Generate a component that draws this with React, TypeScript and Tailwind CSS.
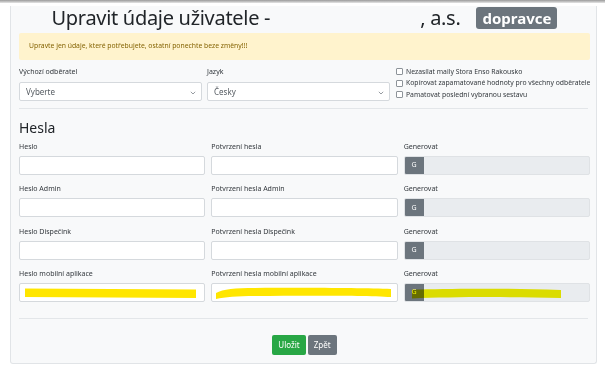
const label = "block h-[10px] text-[7px] leading-[10px] text-[#33383d]";
const input = "block h-[19px] w-full rounded-[2px] border border-[#d5d9dd] bg-white";

function Chevron() {
  return (
    <svg width="6" height="4" viewBox="0 0 6 4" className="absolute right-[5px] top-[8px]">
      <path d="M0.8 0.8 L3 3 L5.2 0.8" fill="none" stroke="#8a9096" strokeWidth="0.9" />
    </svg>
  );
}

function Select({ value }: { value: string }) {
  return (
    <div className="relative flex h-[19px] items-center rounded-[2px] border border-[#d5d9dd] bg-white pl-[6px] text-[8px] text-[#555b61]">
      {value}
      <Chevron />
    </div>
  );
}

function Check({ text }: { text: string }) {
  return (
    <div className="flex h-[11.5px] items-center gap-[3px] text-[6.8px] text-[#33383d]">
      <span className="h-[7px] w-[7px] shrink-0 rounded-[1px] border border-[#8d9399] bg-white" />
      <span className="whitespace-nowrap">{text}</span>
    </div>
  );
}

function Generate({ marked }: { marked?: boolean }) {
  return (
    <div className="relative flex h-[19px] overflow-hidden rounded-[2px] border border-[#dfe2e5] bg-[#e9ecef]">
      <div className="flex w-[19px] items-center justify-center bg-[#6c757d] text-[7px] text-white">G</div>
      {marked && (
        <svg className="absolute left-[6px] top-[2px] mix-blend-multiply" width="152" height="14" viewBox="0 0 152 14">
          <path d="M1 3.5 C 40 2.5, 90 2, 150 4 L150 12 C 90 10.5, 40 11, 1 12.5 Z" fill="#f0ee00" />
        </svg>
      )}
    </div>
  );
}

const rows = [
  ["Heslo", "Potvrzení hesla"],
  ["Heslo Admin", "Potvrzení hesla Admin"],
  ["Heslo Dispečink", "Potvrzení hesla Dispečink"],
  ["Heslo mobilní aplikace", "Potvrzení hesla mobilní aplikace"],
];

export default function App() {
  return (
    <div className="h-[370px] w-[605px] overflow-hidden bg-white" style={{ fontFamily: '"Noto Sans", "Open Sans", sans-serif' }}>
      <div className="h-[3px] bg-gradient-to-b from-[#9a9a9a] to-[#e6e6e6]" />
      <div className="mx-[10px] w-[587px] rounded-b-[3px] border border-t-0 border-[#e1e4e7] bg-[#f8f9fa] pb-[8px] pl-[8px] pr-[6px]">
        {/* Title */}
        <div className="mt-[3px] flex h-[24px] items-center justify-center text-[20px] text-[#212529]">
          <span className="tracking-[-0.3px]">Upravit údaje uživatele -</span>
          <span className="w-[150px]" />
          <span className="tracking-[-0.3px]">, a.s.</span>
          <span className="ml-[16px] flex h-[22px] items-center rounded-[3px] bg-[#6c757d] px-[6px] text-[15px] font-bold text-white">dopravce</span>
        </div>

        {/* Alert */}
        <div className="mt-[3px] flex h-[27px] items-center rounded-[2px] bg-[#fff3cd] pl-[10px] text-[6.8px] text-[#856404]">
          Upravte jen údaje, které potřebujete, ostatní ponechte beze změny!!!
        </div>

        {/* Customer / language / options */}
        <div className="mt-[6px] grid grid-cols-[183px_183px_1fr] gap-x-[5px]">
          <div className="pt-[1px]">
            <span className={label}>Výchozí odběratel</span>
            <div className="mt-[5px]">
              <Select value="Vyberte" />
            </div>
          </div>
          <div className="pt-[1px]">
            <span className={label}>Jazyk</span>
            <div className="mt-[5px]">
              <Select value="Česky" />
            </div>
          </div>
          <div className="pl-[1px]">
            <Check text="Nezasílat maily Stora Enso Rakousko" />
            <Check text="Kopírovat zapamatované hodnoty pro všechny odběratele" />
            <Check text="Pamatovat poslední vybranou sestavu" />
          </div>
        </div>

        <div className="mr-[2px] mt-[7px] border-t border-[#e3e6e9]" />

        {/* Passwords */}
        <h3 className="mt-[11px] h-[16px] text-[14px] leading-[16px] text-[#212529]">Hesla</h3>

        <div className="mt-[6px] grid grid-cols-3 gap-x-[6px] gap-y-[9.4px]">
          {rows.map(([a, b], i) => (
            <div key={a} className="contents">
              <div>
                <span className={label}>{a}</span>
                <div className={`relative mt-[4px] ${input}`}>
                  {i === 3 && (
                    <svg className="absolute left-[5px] top-[3px]" width="172" height="12" viewBox="0 0 172 12">
                      <path d="M0 1.5 L171 2.5 L171 11 L0 10 Z" fill="#ffe600" />
                    </svg>
                  )}
                </div>
              </div>
              <div>
                <span className={label}>{b}</span>
                <div className={`relative mt-[4px] ${input}`}>
                  {i === 3 && (
                    <svg className="absolute left-[3px] top-[1px]" width="180" height="15" viewBox="0 0 180 15">
                      <path d="M1 8 C 8 4, 20 3, 40 3 C 90 2.5, 150 3, 176 4 L176 12 C 150 10.5, 90 10.5, 40 11 C 22 11, 10 12, 1 14 Z" fill="#ffe600" />
                    </svg>
                  )}
                </div>
              </div>
              <div>
                <span className={label}>Generovat</span>
                <div className="mt-[4px]">
                  <Generate marked={i === 3} />
                </div>
              </div>
            </div>
          ))}
        </div>

        <div className="mr-[2px] mt-[16px] border-t border-[#e3e6e9]" />

        <div className="mt-[16px] flex justify-center gap-[2px]">
          <button className="h-[20px] rounded-[2px] bg-[#28a745] px-[6px] text-[8px] text-white">Uložit</button>
          <button className="h-[20px] rounded-[2px] bg-[#6c757d] px-[6px] text-[8px] text-white">Zpět</button>
        </div>
      </div>
    </div>
  );
}
